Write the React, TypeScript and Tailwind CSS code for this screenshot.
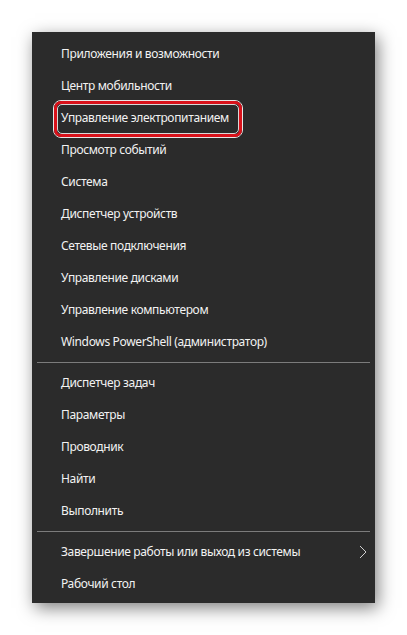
import React from 'react'

const groups: string[][] = [
  [
    'Приложения и возможности',
    'Центр мобильности',
    'Управление электропитанием',
    'Просмотр событий',
    'Система',
    'Диспетчер устройств',
    'Сетевые подключения',
    'Управление дисками',
    'Управление компьютером',
    'Windows PowerShell (администратор)',
  ],
  ['Диспетчер задач', 'Параметры', 'Проводник', 'Найти', 'Выполнить'],
  ['Завершение работы или выход из системы', 'Рабочий стол'],
]

const Chevron = () => (
  <svg width="8" height="14" viewBox="0 0 8 14" className="absolute right-[8px] top-[9px]">
    <path d="M1 1l6 6-6 6" fill="none" stroke="#d0d0d0" strokeWidth="1" />
  </svg>
)

export default function App() {
  return (
    <div className="w-[407px] h-[635px] bg-white pt-[32px] pl-[32px]" style={{ fontFamily: '"Noto Sans", "Open Sans", sans-serif' }}>
      <div className="w-[343px] h-[571px] bg-[#2b2b2b] pt-[6px] shadow-[3px_5px_16px_rgba(0,0,0,0.5)]">
        {groups.map((items, gi) => (
          <div key={gi}>
            {gi > 0 && (
              <div className="h-[9px] flex items-center px-[5px]">
                <div className="h-px w-full bg-[#7c7c7c]" />
              </div>
            )}
            {items.map((label) => (
              <div key={label} className="relative h-[32px] flex items-center pl-[29px] text-[12px] tracking-[-0.35px] text-[#f2f2f2]">
                {label}
                {label === 'Управление электропитанием' && (
                  <div className="absolute left-[21px] top-[-2px] w-[190px] h-[38px] rounded-[8px] border border-[#e8e8e8]">
                    <div className="w-full h-full rounded-[7px] border-[3px] border-[#d9121b]">
                      <div className="w-full h-full rounded-[5px] border border-[#d8d8d8]" />
                    </div>
                  </div>
                )}
                {label.startsWith('Завершение') && <Chevron />}
              </div>
            ))}
          </div>
        ))}
      </div>
    </div>
  )
}
